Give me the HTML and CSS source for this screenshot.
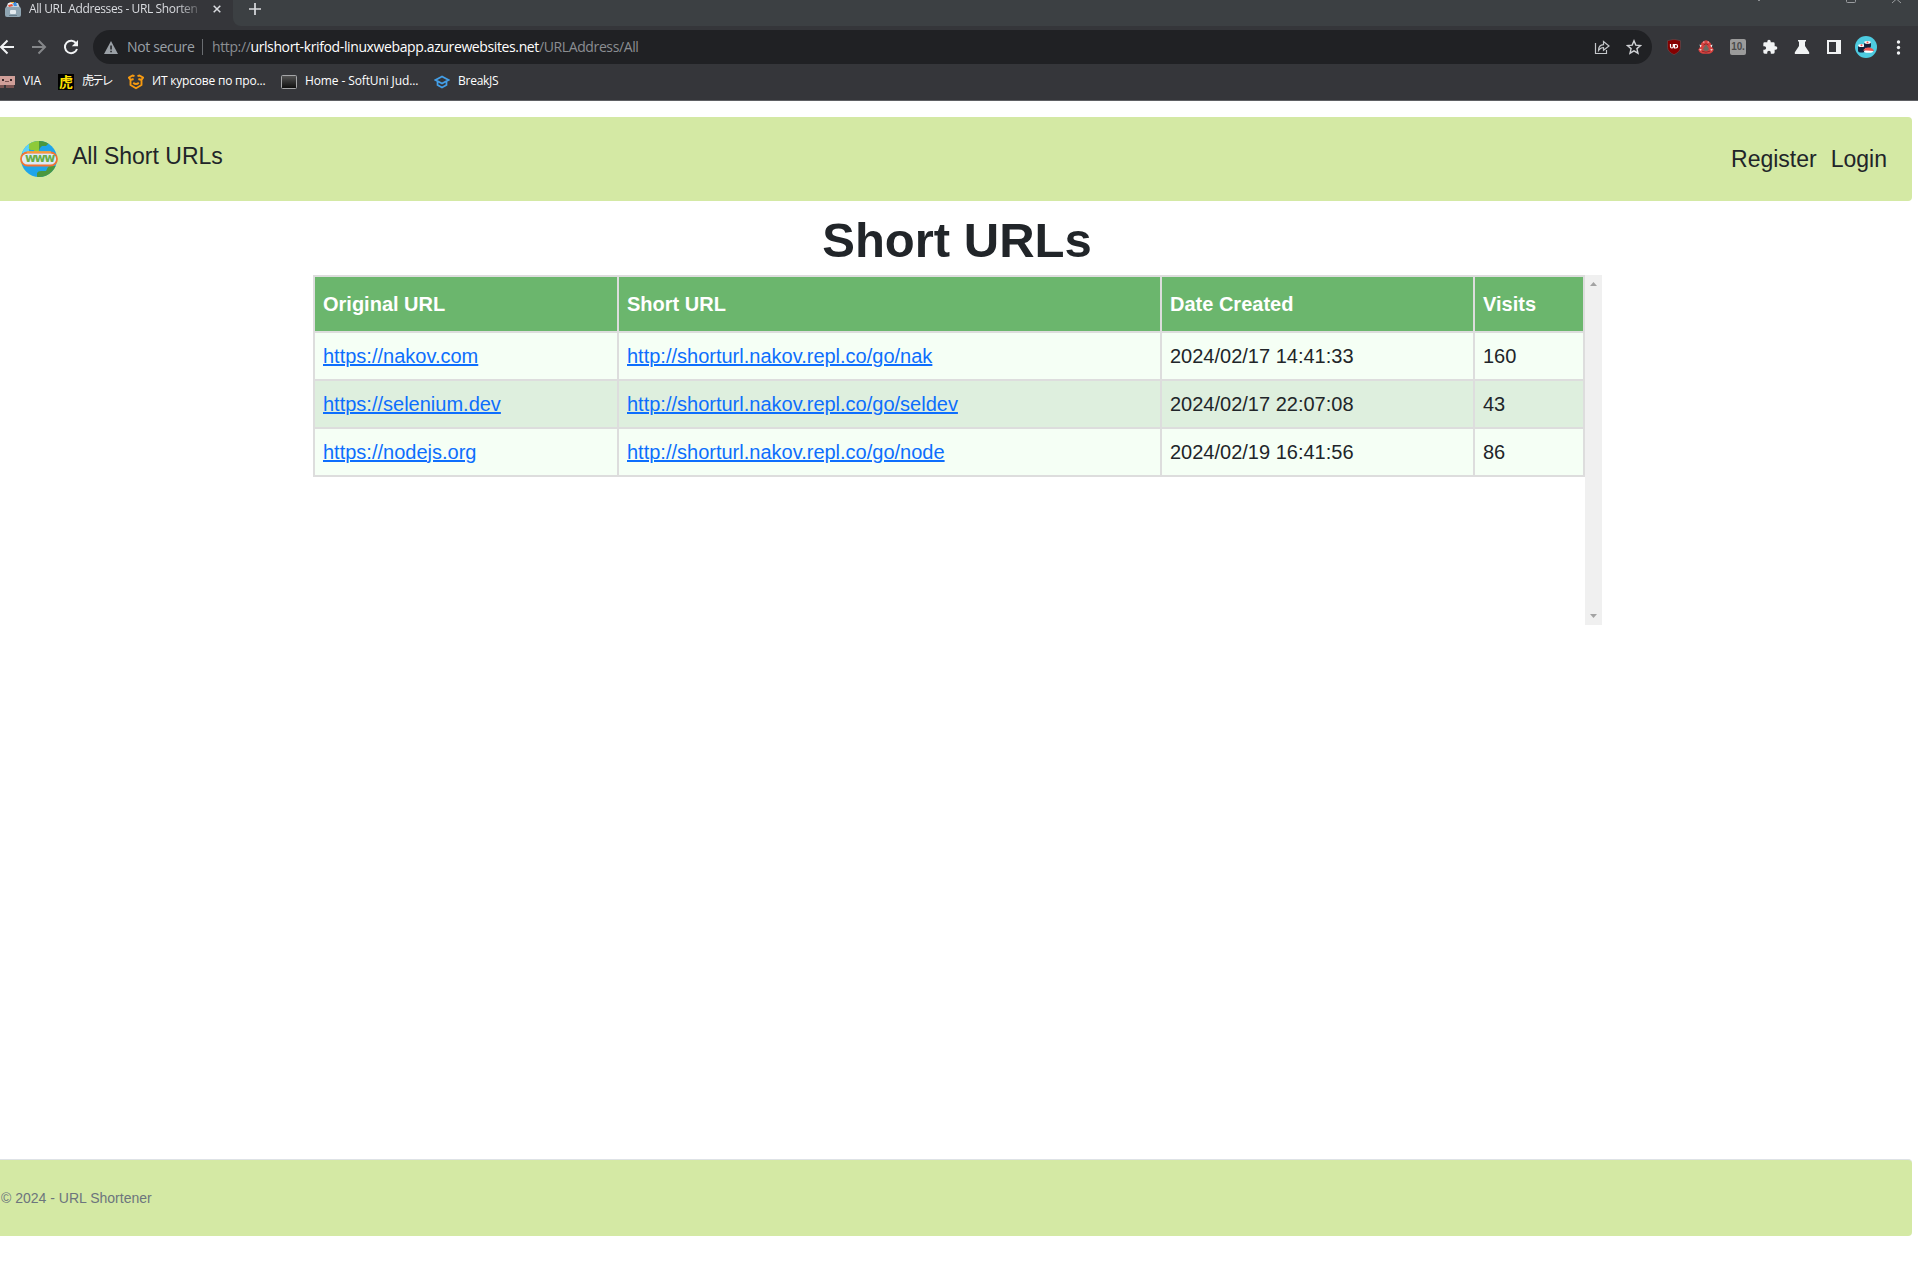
FILE: index.html
```html
<!DOCTYPE html>
<html lang="en">
<head>
<meta charset="utf-8">
<title>All URL Addresses - URL Shortener</title>
<link rel="stylesheet" href="styles.css">
</head>
<body>
<div class="browser">
  <div class="tabstrip">
    <div class="tab">
      <svg class="favicon" width="16" height="16" viewBox="0 0 16 16"><path d="M1 7L3 2h10l2 5z" fill="#c8d3da"/><path d="M3 3q2-3 4-1l-1 3H3z" fill="#f4f6f8"/><path d="M3 4l4-1 1 2-4 1z" fill="#e8503a"/><path d="M8 2l3-1 1 4H9z" fill="#3f8ee0"/><path d="M6 1h3v1H6z" fill="#f0b840"/><rect y="6" width="16" height="10" rx="2" fill="#8fa5b2"/><rect x="5" y="9" width="6" height="4" rx="1" fill="#e4ebef"/><path d="M4 14h8v1H4z" fill="#687f8d"/></svg>
      <span class="tab-title">All URL Addresses - URL Shorten</span>
      <svg class="tab-close" width="8" height="8" viewBox="0 0 8 8"><path d="M.7.7l6.600 6.600M7.300.7L.7 7.300" stroke="#dadce0" stroke-width="1.5"/></svg>
    </div>
    <div class="strip-rest">
      <svg width="12" height="12" viewBox="0 0 12 12"><path d="M6 0v12M0 6h12" stroke="#dadce0" stroke-width="1.7"/></svg>
      <svg class="window-controls" width="150" height="4" viewBox="0 0 150 4"><path d="M6 0h2v1H6z" fill="#8b8e91"/><path d="M94.500 0v1.500q0 1 1 1h7q1 0 1-1V0M140 3l4.500-4 4.500 4" fill="none" stroke="#9a9da0"/></svg>
    </div>
  </div>
  <div class="toolbar">
    <div class="nav">
      <svg width="16" height="16" viewBox="0 0 16 16"><path d="M15 8H2.500M8.500 1.500L2 8l6.500 6.500" fill="none" stroke="#f1f3f4" stroke-width="2"/></svg>
      <svg width="16" height="16" viewBox="0 0 16 16"><path d="M1 8h12.500M7.500 1.500L14 8l-6.500 6.500" fill="none" stroke="#85878a" stroke-width="2"/></svg>
      <svg width="16" height="16" viewBox="0 0 16 16"><path d="M13.300 4.500A6.200 6.200 0 1 0 14 10" fill="none" stroke="#f1f3f4" stroke-width="2"/><path d="M15 1v6.200H8.800z" fill="#f1f3f4"/></svg>
    </div>
    <div class="omnibox">
      <svg width="14" height="13" viewBox="0 0 14 13"><path d="M7 0l7 13H0z" fill="#9aa0a6"/><path d="M6.300 4.500h1.500V8.500H6.300zM6.300 9.700h1.500v1.500H6.300z" fill="#202124"/></svg>
      <span class="insecure">Not secure</span>
      <span class="divider"></span>
      <span class="address"><span class="scheme">http://</span><span class="host">urlshort-krifod-linuxwebapp.azurewebsites.net</span><span class="path">/URLAddress/All</span></span>
      <div class="omni-actions">
        <svg width="16" height="16" viewBox="0 0 16 16"><path d="M1.500 4v10.500h11V11M4.500 11.500q0-5.500 5-5.800V2.500L15 7l-5.500 4.300V8.500q-3 0-5 3z" fill="none" stroke="#c4c7ca" stroke-width="1.200"/></svg>
        <svg width="16" height="16" viewBox="0 0 16 16"><path d="M8 1.800l1.800 4.300 4.700.4-3.600 3.100 1.100 4.600L8 11.800l-4 2.400 1.100-4.600-3.600-3.100 4.700-.4z" fill="none" stroke="#d0d2d5" stroke-width="1.400"/></svg>
      </div>
    </div>
    <div class="extensions">
      <svg width="16" height="16" viewBox="0 0 16 16"><path d="M8 .3l6.500 1.400v6.500q0 4.500-6.500 7.500Q1.500 12.700 1.500 8.200V1.700z" fill="#850000" stroke="#655052" stroke-width=".6"/><path d="M4.500 5v2.500q0 1.500 1.400 1.500T7.300 7.500V5M8.500 5.500h1.300q1.800 0 1.800 1.700T9.800 9H8.500z" fill="none" stroke="#fff" stroke-width="1.200"/></svg>
      <svg width="16" height="16" viewBox="0 0 16 16"><path d="M2 8Q3 2 8 1.200 13 2 14 8l1.700 2.500Q15 14 11 14.700H5Q1 14 .3 10.500z" fill="#d8423f"/><path d="M1.500 5.500l2.300 1-1.500 2zM14.500 5.500l-2.300 1 1.500 2zM5.500 2.300l1.300.8-1.500 1zM10.500 2.300l-1.300.8 1.500 1zM1 10.500l2.500-.5-.5 1.800zM15 10.500l-2.500-.5.5 1.800z" fill="#eee"/><path d="M8 5l2.800 4.500Q11 12 8 12T5.200 9.500z" fill="#6d6a61"/><path d="M5.500 6Q8 3.500 10.500 6M4 12.200q4 2 8 0" stroke="#8e2a2c" fill="none"/></svg>
      <span class="badge-ten">10.</span>
      <svg width="16" height="16" viewBox="0 0 24 24"><path d="M20.500 11H19V7a2 2 0 0 0-2-2h-4V3.500a2.500 2.500 0 0 0-5 0V5H4a2 2 0 0 0-2 2v3.800h1.500a2.700 2.700 0 0 1 0 5.400H2V20a2 2 0 0 0 2 2h3.800v-1.500a2.700 2.700 0 0 1 5.400 0V22H17a2 2 0 0 0 2-2v-4h1.500a2.500 2.500 0 0 0 0-5z" fill="#f1f3f4"/></svg>
      <svg width="16" height="16" viewBox="0 0 16 16"><path d="M4 1h8v1.500h-1V7l4 6q1 2-1 2H2q-2 0-1-2l4-6V2.500H4z" fill="#f1f3f4"/></svg>
      <svg width="16" height="16" viewBox="0 0 16 16"><path d="M1 1h14v14H1zM3 3v10h7V3z" fill="#f1f3f4" fill-rule="evenodd"/></svg>
      <svg class="avatar" width="22" height="22" viewBox="0 0 22 22"><circle cx="11" cy="11" r="11" fill="#4dcbe0"/><rect x="3" y="9" width="7" height="7.500" rx="2" fill="#16213d"/><ellipse cx="6.500" cy="9.500" rx="3.300" ry="1.500" fill="#fff"/><circle cx="6.500" cy="9.300" r="1" fill="#e94f4f"/><rect x="9" y="5.500" width="7" height="6.500" rx="2" fill="#16213d"/><ellipse cx="12.500" cy="6.500" rx="3.300" ry="1.400" fill="#fff"/><circle cx="12.500" cy="6.400" r="1" fill="#e94f4f"/><ellipse cx="13.500" cy="15.200" rx="4.500" ry="1.500" fill="#fff"/><path d="M8 14.500q2-3.500 6-3 4.500.5 5 3.500-5.500-.8-11-.5z" fill="#ef5350"/></svg>
      <svg width="16" height="16" viewBox="0 0 16 16"><g fill="#f1f3f4"><circle cx="8.500" cy="3" r="1.700"/><circle cx="8.500" cy="8.500" r="1.700"/><circle cx="8.500" cy="14" r="1.700"/></g></svg>
    </div>
  </div>
  <div class="bookmarks">
    <div class="bookmark b-via"><svg width="16" height="16" viewBox="0 0 16 16"><path d="M0 2h16v9H0z" fill="#d09f99"/><path d="M3 5h2v2H3zM11 5h2v2h-2z" fill="#39282a"/><path d="M6 7h4v1H6z" fill="#7a5351"/><path d="M0 11h5v3H0zM7 11h8v3H7z" fill="#795452"/></svg><span>VIA</span></div>
    <div class="bookmark b-tora"><span class="tora-icon">虎</span><span>虎テレ</span></div>
    <div class="bookmark b-it"><svg width="16" height="16" viewBox="0 0 16 16"><path d="M6.500 2.200L4.500 1.500.9 3.600 2.600 6l3-1M9.500 2.200l2-.7 3.600 2.100L13.400 6l-3-1M2.500 6v5L8 14.200l5.500-3.200V6M5.200 8.700Q8 11.200 10.800 8.700" fill="none" stroke="#f79a10" stroke-width="1.900" stroke-linejoin="round"/></svg><span>ИТ курсове по про...</span></div>
    <div class="bookmark b-home"><svg width="16" height="16" viewBox="0 0 16 16"><defs><linearGradient id="screen" x2="0" y2="1"><stop stop-color="#555"/><stop offset="1" stop-color="#0c0c0c"/></linearGradient></defs><rect x=".5" y="1.500" width="15" height="13" rx="1" fill="url(#screen)" stroke="#a5a6a8"/></svg><span>Home - SoftUni Jud...</span></div>
    <div class="bookmark b-break"><svg width="16" height="16" viewBox="0 0 16 16"><path d="M8 2.500L1.500 6 8 9.500 14.500 6zM3.500 7.500V11L8 13.600l4.500-2.600V7.500" fill="none" stroke="#439fe8" stroke-width="1.700"/></svg><span>BreakJS</span></div>
  </div>
</div>
<header class="site-header">
  <a class="brand" href="#"><svg width="38" height="36" viewBox="0 0 38 36"><defs><clipPath id="globe"><circle cx="19" cy="18" r="18"/></clipPath></defs><g clip-path="url(#globe)"><path d="M0 0h38v36H0z" fill="#1fa5ea"/><path d="M1 0h12v8H9v4H1z" fill="#5ad2fb"/><path d="M9 0h10v11h-5V9H11q-3-1-2-4z" fill="#8fca3a"/><path d="M19 0h12q-3 3-5 5h-4q-3 2-3 6z" fill="#4a983f"/><path d="M17 36v-4q1-2 4-2h5q1-3 3-5h9v11z" fill="#4a983f"/></g><rect x="1" y="11.500" width="36" height="13" rx="6.500" fill="#dce9f7" stroke="#f17433" stroke-width="1.800"/><path d="M7 11h24" stroke="#f8a83b" stroke-width="1.500"/><text x="5" y="21" class="www">www</text></svg><span>All Short URLs</span></a>
  <nav class="account"><a href="#">Register</a><a href="#">Login</a></nav>
</header>
<main>
  <h1>Short URLs</h1>
  <div class="table-wrap">
    <table>
      <colgroup><col class="c1"><col class="c2"><col class="c3"><col class="c4"></colgroup>
      <thead><tr><th>Original URL</th><th>Short URL</th><th>Date Created</th><th>Visits</th></tr></thead>
      <tbody>
        <tr><td><a href="#">https://nakov.com</a></td><td><a href="#">http://shorturl.nakov.repl.co/go/nak</a></td><td>2024/02/17 14:41:33</td><td>160</td></tr>
        <tr><td><a href="#">https://selenium.dev</a></td><td><a href="#">http://shorturl.nakov.repl.co/go/seldev</a></td><td>2024/02/17 22:07:08</td><td>43</td></tr>
        <tr><td><a href="#">https://nodejs.org</a></td><td><a href="#">http://shorturl.nakov.repl.co/go/node</a></td><td>2024/02/19 16:41:56</td><td>86</td></tr>
      </tbody>
    </table>
    <div class="scrollbar">
      <svg width="7" height="4" viewBox="0 0 7 4"><path d="M3.500 0L7 4H0z" fill="#a3a3a3"/></svg>
      <svg width="7" height="4" viewBox="0 0 7 4"><path d="M0 0h7L3.500 4z" fill="#a3a3a3"/></svg>
    </div>
  </div>
</main>
<footer>© 2024 - URL Shortener</footer>
</body>
</html>
```
FILE: styles.css
```css
* { box-sizing: border-box; }
body {
  margin: 0;
  height: 1265px;
  display: flex;
  flex-direction: column;
  overflow: hidden;
  background: #fff;
  color: #212529;
  font-family: "Liberation Sans", Arial, sans-serif;
}
svg { display: block; flex: none; }
a { color: inherit; text-decoration: none; }

/* Browser window */
.browser {
  height: 101px;
  flex: none;
  background: #35363a;
  border-bottom: 1px solid #5f6064;
  font-family: "Open Sans", "Noto Sans CJK JP", sans-serif;
  white-space: nowrap;
}
.tabstrip { display: flex; height: 26px; }
.tab { width: 233px; height: 18px; padding-left: 5px; display: flex; align-items: center; }
.tab-title {
  width: 172px;
  margin-left: 8px;
  font-size: 12px;
  line-height: 18px;
  color: #dadce0;
  letter-spacing: -0.38px;
  mask-image: linear-gradient(to right, #000 148px, transparent 176px);
}
.tab-close { margin-left: 12px; }
.strip-rest {
  flex: 1;
  display: flex;
  justify-content: space-between;
  padding: 3px 16px 0 16px;
  background: #3c4043;
  border-bottom-left-radius: 8px;
}
.window-controls { margin-top: -3px; }
.toolbar { display: flex; align-items: center; height: 42px; }
.nav { display: flex; gap: 16px; width: 93px; margin-left: -1px; }
.omnibox {
  flex: none;
  width: 1559px;
  height: 34px;
  margin-left: 1px;
  padding: 0 10px 0 11px;
  display: flex;
  align-items: center;
  border-radius: 17px;
  background: #202124;
  color: #9aa0a6;
  font-size: 14px;
  line-height: 20px;
}
.insecure { width: 67px; margin-left: 9px; letter-spacing: -0.35px; }
.divider { width: 1px; height: 16px; margin: 0 9px 0 8px; background: #6a6d71; }
.insecure, .address { padding-bottom: 1px; }
.address { letter-spacing: -0.38px; }
.scheme, .path { color: #8b8e92; }
.host { color: #fff; }
.omni-actions { display: flex; gap: 16px; margin-left: auto; }
.extensions { display: flex; align-items: center; gap: 16px; margin-left: 14px; }
.avatar { margin: 0 -3px; }
.badge-ten {
  width: 16px;
  height: 16px;
  border-radius: 2px;
  background: #9b9b9b;
  color: #4b4b4b;
  font: bold 10px/16px "Liberation Sans", sans-serif;
  letter-spacing: -0.2px;
  text-align: center;
}
.bookmarks { display: flex; height: 28px; font-size: 12px; color: #fff; }
.bookmark { display: flex; align-items: center; gap: 8px; flex: none; line-height: 18px; }
.bookmark svg + span, .tora-icon + span { padding-bottom: 2px; }
.b-via { width: 59px; margin-left: -1px; }
.b-tora { width: 70px; letter-spacing: -2.2px; }
.b-it { width: 153px; letter-spacing: -0.2px; }
.b-home { width: 153px; letter-spacing: -0.12px; }
.b-break { letter-spacing: -0.25px; }
.tora-icon {
  width: 16px;
  height: 16px;
  background: #000;
  color: #ffe100;
  font: bold 14px/15px "Noto Sans CJK JP", sans-serif;
  letter-spacing: 0;
  text-align: center;
}

/* Page */
.site-header {
  flex: none;
  width: 1912px;
  height: 84px;
  margin-top: 16px;
  padding: 0 25px 0 20px;
  display: flex;
  justify-content: space-between;
  align-items: center;
  border-radius: 0 4px 4px 0;
  background: #d4e9a4;
  font-size: 23px;
}
.brand { display: flex; align-items: center; }
.brand span { margin: -6px 0 0 14px; }
.www { font: bold 12px "DejaVu Sans", sans-serif; letter-spacing: -1.5px; fill: #68ad45; }
.account { display: flex; gap: 14px; }
main { flex: 1; }
h1 { margin: 0; padding-top: 9px; width: 1914px; font-size: 49px; line-height: 60px; height: 74px; text-align: center; }
.table-wrap { display: flex; align-items: flex-start; width: 1289px; height: 350px; margin-left: 313px; }
table { flex: none; width: 1272px; table-layout: fixed; border-collapse: collapse; font-size: 20px; line-height: 30px; }
.c1 { width: 304px; }
.c2 { width: 543px; }
.c3 { width: 313px; }
.c4 { width: 110px; }
th, td { border: 2px solid #ddd; padding: 8px; text-align: left; }
th { padding: 12px 8px; background: #6bb66d; color: #fff; }
td { background: #f5fff5; }
tr:nth-child(even) td { background: #deefde; }
td a { color: #0d6efd; text-decoration: underline; }
.scrollbar {
  width: 17px;
  height: 350px;
  padding: 7px 5px;
  display: flex;
  flex-direction: column;
  justify-content: space-between;
  background: #f0f0f0;
}
footer {
  flex: none;
  width: 1912px;
  height: 77px;
  margin-bottom: 29px;
  padding-left: 1px;
  border-top: 1px solid #dee2e6;
  border-radius: 0 4px 4px 0;
  background: #d4e9a4;
  color: #6c757d;
  font-size: 14px;
  line-height: 76px;
}
```
